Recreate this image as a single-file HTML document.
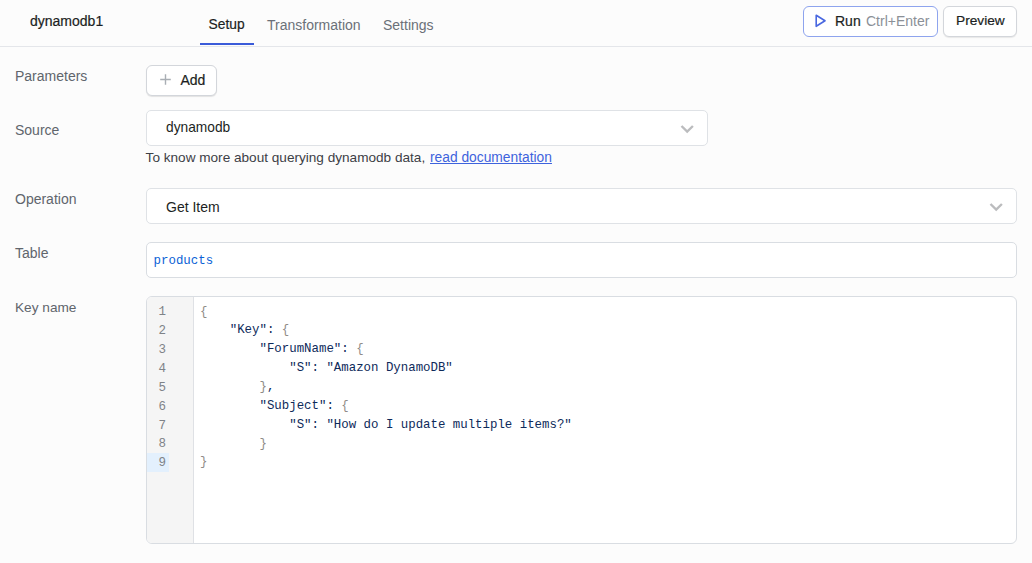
<!DOCTYPE html>
<html><head><meta charset="utf-8">
<style>
*{box-sizing:border-box;margin:0;padding:0}
html,body{width:1032px;height:563px;overflow:hidden;background:#fcfcfc;font-family:"Liberation Sans",sans-serif;}
.t{position:absolute;font-size:14px;line-height:16px;white-space:pre;color:#1c1f23}
.box{position:absolute;background:#fff;border:1px solid #dadde2;border-radius:5px}
.m{font-family:"Liberation Mono",monospace}
.md{-webkit-text-stroke:0.2px currentColor}
</style></head><body>
<!-- header -->
<div style="position:absolute;left:0;top:46px;width:1032px;height:1px;background:#e4e6ea"></div>
<div class="t md" style="left:30px;top:13px;color:#1c1f23">dynamodb1</div>
<div class="t md" style="left:208.5px;top:17px;color:#1c1f23;font-size:13.8px">Setup</div>
<div class="t" style="left:267px;top:17px;color:#6b7078">Transformation</div>
<div class="t" style="left:383px;top:17px;color:#6b7078">Settings</div>
<div style="position:absolute;left:200px;top:43px;width:54px;height:2px;background:#3a5bd9"></div>

<div class="box" style="left:803px;top:6px;width:135px;height:31px;border-color:#8ea4ee;border-radius:6px"></div>
<svg style="position:absolute;left:813px;top:12px" width="16" height="18" viewBox="0 0 16 18"><path d="M3.2 3.3 L12 8.75 L3.2 14.3 Z" fill="none" stroke="#4a68e0" stroke-width="1.6" stroke-linejoin="round"/></svg>
<div class="t md" style="left:835px;top:13px">Run</div>
<div class="t" style="left:866px;top:13px;color:#8b9097">Ctrl+Enter</div>

<div class="box" style="left:943px;top:6px;width:74px;height:31px;border-color:#d3d6db;border-radius:6px;box-shadow:0 1px 1px rgba(0,0,0,.08)"></div>
<div class="t md" style="left:956px;top:13px;font-size:13.7px">Preview</div>

<!-- labels -->
<div class="t" style="left:15px;top:68px;color:#60656c">Parameters</div>
<div class="t" style="left:15px;top:122px;color:#60656c">Source</div>
<div class="t" style="left:15px;top:191px;color:#60656c">Operation</div>
<div class="t" style="left:15px;top:245px;color:#60656c">Table</div>
<div class="t" style="left:15px;top:300px;color:#60656c;font-size:13.65px">Key name</div>

<!-- add button -->
<div class="box" style="left:146px;top:65px;width:71px;height:31px;border-color:#d3d6db;border-radius:6px;box-shadow:0 1px 1px rgba(0,0,0,.1)"></div>
<svg style="position:absolute;left:159px;top:73px" width="13" height="13" viewBox="0 0 13 13"><path d="M6.5 1.2 V11.8 M1.2 6.5 H11.8" stroke="#a9aeb4" stroke-width="1.4"/></svg>
<div class="t md" style="left:180.5px;top:72px">Add</div>

<!-- source select -->
<div class="box" style="left:146px;top:110px;width:562px;height:36px;border-color:#dfe2e6"></div>
<div class="t" style="left:166px;top:120px;font-size:13.75px">dynamodb</div>
<svg style="position:absolute;left:679px;top:123px" width="16" height="12" viewBox="0 0 16 12"><path d="M2.5 3.0 L8.2 8.6 L13.9 3.0" fill="none" stroke="#bbbcbe" stroke-width="2.4"/></svg>
<div class="t" style="left:145.6px;top:150px;color:#3c4046;font-size:13.6px">To know more about querying dynamodb data,</div>
<div class="t" style="left:430px;top:150px;color:#3e63dd;text-decoration:underline;font-size:13.8px">read documentation</div>

<!-- operation select -->
<div class="box" style="left:146px;top:188px;width:871px;height:36px;border-color:#dfe2e6"></div>
<div class="t" style="left:166px;top:199px">Get Item</div>
<svg style="position:absolute;left:988px;top:201px" width="16" height="12" viewBox="0 0 16 12"><path d="M2.5 3.0 L8.2 8.6 L13.9 3.0" fill="none" stroke="#bbbcbe" stroke-width="2.4"/></svg>

<!-- table input -->
<div class="box" style="left:146px;top:242px;width:871px;height:36px;border-color:#d9dde2"></div>
<div class="t m" style="left:153.6px;top:252px;font-size:12.4px;line-height:18.75px;color:#0b62d6">products</div>

<!-- editor -->
<div class="box" style="left:146px;top:296px;width:871px;height:248px;border-color:#d9dde2;overflow:hidden;border-radius:6px">
  <div style="position:absolute;left:0;top:0;width:47px;height:100%;background:#f5f5f5;border-right:1px solid #dfe1e5"></div>
  <div style="position:absolute;left:0;top:156px;width:22px;height:19px;background:#e3f0fd"></div>
</div>
<div class="m" style="position:absolute;left:147px;top:303.4px;width:19px;text-align:right;font-size:12.5px;line-height:18.86px;color:#7f8388;white-space:pre">1
2
3
4
5
6
7
8
9</div>
<div class="m" style="position:absolute;left:200px;top:302.6px;font-size:12.4px;line-height:18.86px;color:#0e2a5a;white-space:pre"><span class="b">{</span>
    "Key": <span class="b">{</span>
        "ForumName": <span class="b">{</span>
            "S": "Amazon DynamoDB"
        <span class="b">}</span>,
        "Subject": <span class="b">{</span>
            "S": "How do I update multiple items?"
        <span class="b">}</span>
<span class="b">}</span></div>
<style>.b{color:#8f8b87}</style>
</body></html>
